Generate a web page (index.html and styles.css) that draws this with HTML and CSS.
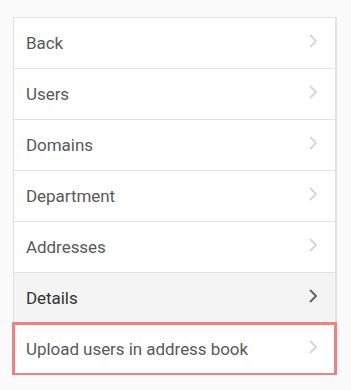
FILE: index.html
```html
<!DOCTYPE HTML>
<html>
<head>
<meta charset="utf-8">
<title>Menu</title>
<link rel="stylesheet" href="styles.css">
</head>
<body>
<ul class="menu">
  <li class="item"><span class="lab">Back</span><svg class="chev" viewBox="0 0 8 14"><path d="M1 1l6 6-6 6"/></svg></li>
  <li class="item"><span class="lab">Users</span><svg class="chev" viewBox="0 0 8 14"><path d="M1 1l6 6-6 6"/></svg></li>
  <li class="item"><span class="lab">Domains</span><svg class="chev" viewBox="0 0 8 14"><path d="M1 1l6 6-6 6"/></svg></li>
  <li class="item"><span class="lab">Department</span><svg class="chev" viewBox="0 0 8 14"><path d="M1 1l6 6-6 6"/></svg></li>
  <li class="item"><span class="lab">Addresses</span><svg class="chev" viewBox="0 0 8 14"><path d="M1 1l6 6-6 6"/></svg></li>
  <li class="item active"><span class="lab">Details</span><svg class="chev" viewBox="0 0 8 14"><path d="M1 1l6 6-6 6"/></svg></li>
  <li class="item marked"><span class="lab">Upload users in address book</span><svg class="chev" viewBox="0 0 8 14"><path d="M1 1l6 6-6 6"/></svg></li>
</ul>
</body>
</html>
```

FILE: styles.css
```css
body {
  margin: 0;
  padding: 17px 14px 0 13px;
  background: #fafafa;
  font-family: Roboto, "Liberation Sans", sans-serif;
}
.menu {
  list-style: none;
  margin: 0;
  padding: 0;
  width: 321px;
  background: #fff;
  border: 1px solid #e2e2e2;
  border-right: 2px solid #e2e2e2;
}
.item {
  display: flex;
  align-items: center;
  justify-content: space-between;
  height: 50px;
  padding: 0 18px 0 12px;
  border-bottom: 1px solid #e2e2e2;
  font-size: 17px;
  letter-spacing: -0.05px;
  color: #595959;
}
.item:last-child {
  border-bottom: none;
}
.chev {
  width: 8px;
  height: 14px;
  margin-top: -4px;
  fill: none;
  stroke: #d6d6d6;
  stroke-width: 1.8;
}
.active {
  background: #f4f4f4;
  color: #333;
}
.active .chev {
  stroke: #666;
  stroke-width: 2;
}
.marked {
  outline: 3px solid #ee8282;
  outline-offset: -1px;
}
```
